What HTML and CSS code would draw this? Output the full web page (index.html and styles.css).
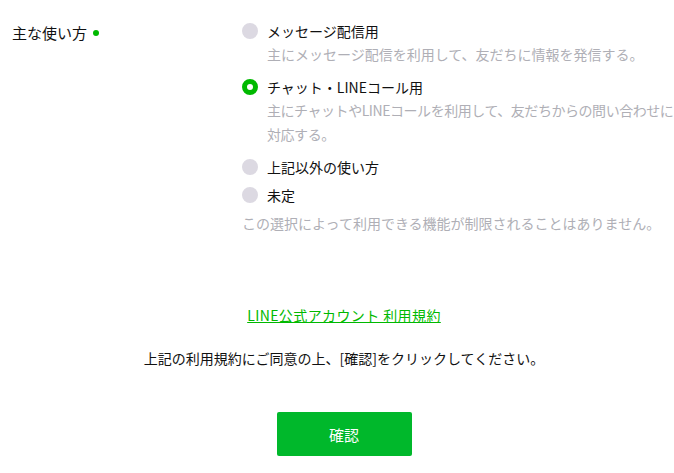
FILE: index.html
```html
<!DOCTYPE html>
<html lang="ja">
<head>
    <meta charset="UTF-8">
    <meta name="viewport" content="width=device-width, initial-scale=1.0">
    <title>LINE公式アカウント</title>
    <link rel="stylesheet" href="styles.css">
</head>
<body>
    <div class="page">
        <div class="field">
            <div class="field-label">主な使い方<span class="required-dot"></span></div>
            <div class="field-body">
                <label class="option">
                    <span class="radio"></span>
                    <span class="option-title">メッセージ配信用</span>
                </label>
                <p class="option-desc">主にメッセージ配信を利用して、友だちに情報を発信する。</p>

                <label class="option">
                    <span class="radio checked"></span>
                    <span class="option-title">チャット・LINEコール用</span>
                </label>
                <p class="option-desc tight">主にチャットやLINEコールを利用して、友だちからの問い合わせに対応する。</p>

                <label class="option">
                    <span class="radio"></span>
                    <span class="option-title">上記以外の使い方</span>
                </label>

                <label class="option">
                    <span class="radio"></span>
                    <span class="option-title">未定</span>
                </label>
                <p class="field-note">この選択によって利用できる機能が制限されることはありません。</p>
            </div>
        </div>

        <div class="terms">
            <a href="#" class="terms-link">LINE公式アカウント 利用規約</a>
            <p class="terms-text">上記の利用規約にご同意の上、[確認]をクリックしてください。</p>
            <button type="button" class="confirm-btn">確認</button>
        </div>
    </div>
</body>
</html>
```

FILE: styles.css
```css
body {
    margin: 0;
    background-color: #ffffff;
    font-family: "Noto Sans CJK JP", "Noto Sans", sans-serif;
    color: #111111;
    overflow: hidden;
}
.page {
    padding-top: 20px;
}
.field {
    display: flex;
}
.field-label {
    width: 242px;
    flex-shrink: 0;
    padding-left: 12px;
    box-sizing: border-box;
    padding-top: 2px;
    font-size: 15px;
    line-height: 22px;
    display: flex;
    align-items: center;
    align-self: flex-start;
}
.required-dot {
    width: 6px;
    height: 6px;
    border-radius: 50%;
    background-color: #00b900; /* punto verde de obligatorio */
    margin-left: 6px;
}
.field-body {
    flex: none;
    width: 440px; /* la columna sigue más allá del borde derecho */
    display: flex;
    flex-direction: column;
    gap: 6px;
}
.option {
    display: flex;
    align-items: center;
    height: 22px;
    font-size: 14px;
    cursor: pointer;
}
.radio {
    width: 16px;
    height: 16px;
    border-radius: 50%;
    background-color: #dcd9e2;
    margin-right: 9px;
    box-sizing: border-box;
    flex-shrink: 0;
}
.radio.checked {
    background-color: #ffffff;
    border: 5px solid #00b900;
}
.option-desc {
    margin: -6px 0 4px 25px;
    font-size: 14px;
    line-height: 24px;
    color: #afafb6;
}
.option-desc.tight {
    letter-spacing: -0.45px;
}
.field-note {
    margin: 0;
    font-size: 14px;
    line-height: 22px;
    color: #afafb6;
}
.terms {
    display: flex;
    flex-direction: column;
    align-items: center;
    width: 674px;
    padding-left: 14px;
    box-sizing: border-box;
    margin-top: 70px;
}
.terms-link {
    font-size: 14px;
    line-height: 22px;
    letter-spacing: 0.4px;
    color: #00b900;
    text-decoration: underline;
}
.terms-text {
    margin: 21px 0 0;
    font-size: 14px;
    line-height: 22px;
}
.confirm-btn {
    margin-top: 43px;
    width: 135px;
    height: 44px;
    border: none;
    border-radius: 2px;
    background-color: #00b82b;
    color: #ffffff;
    font-family: inherit;
    font-size: 15px;
    cursor: pointer;
}
.confirm-btn:hover {
    background-color: #00a326;
}
```
